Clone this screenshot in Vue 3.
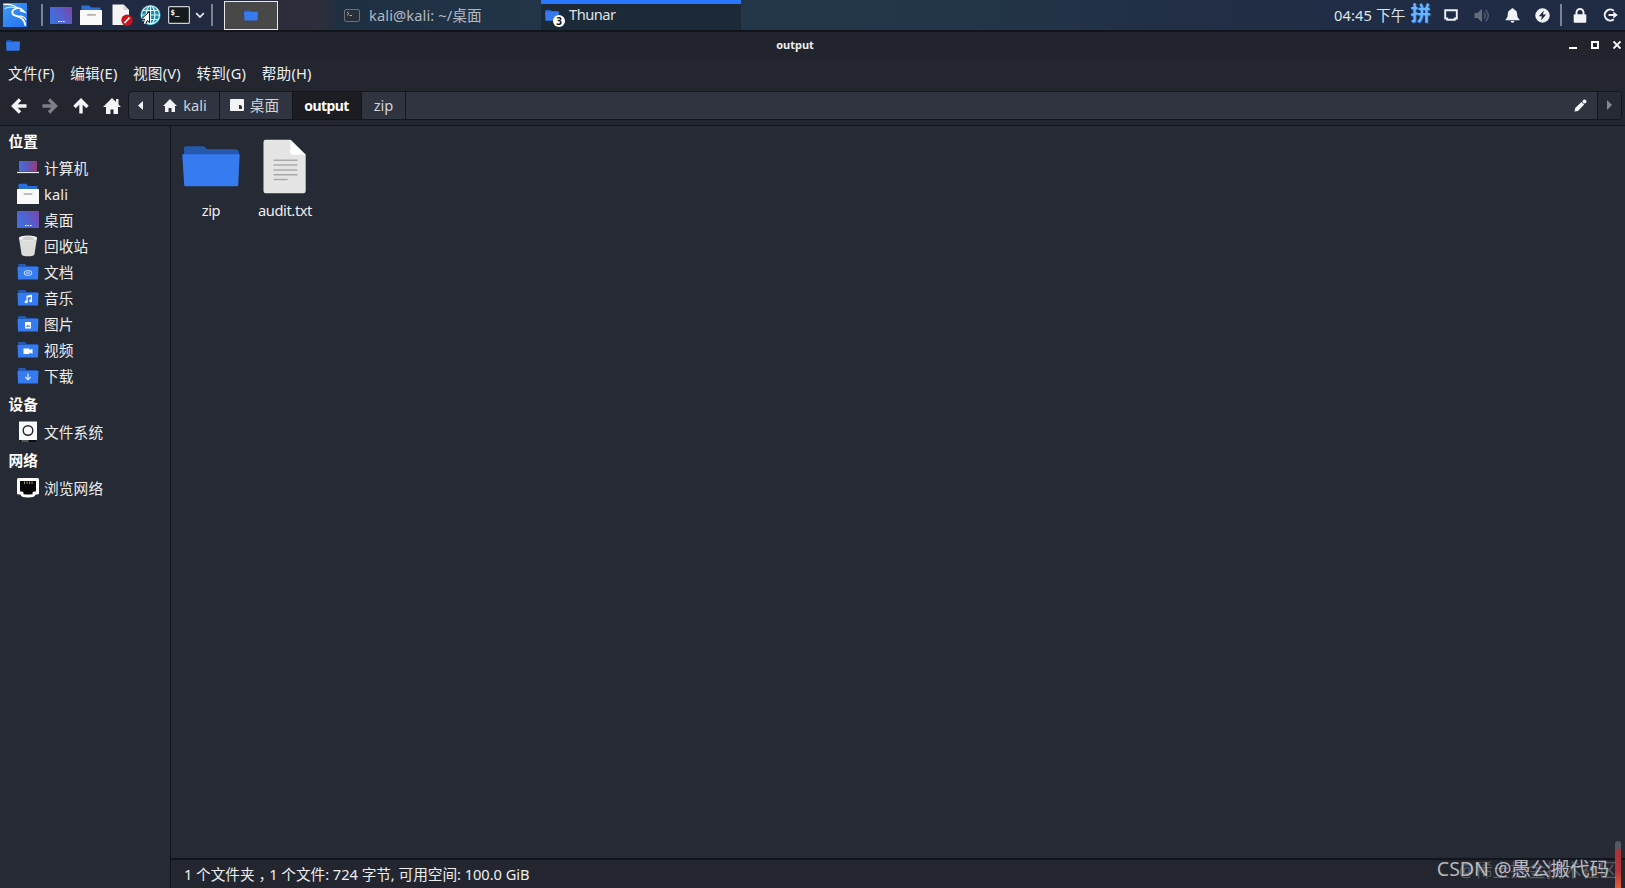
<script setup>
import { ref } from 'vue'

const menus = ['文件(F)', '编辑(E)', '视图(V)', '转到(G)', '帮助(H)']

const groups = [
  {
    title: '位置',
    items: [
      { name: '计算机', icon: 'computer' },
      { name: 'kali', icon: 'home' },
      { name: '桌面', icon: 'desktop' },
      { name: '回收站', icon: 'trash' },
      { name: '文档', icon: 'docs' },
      { name: '音乐', icon: 'music' },
      { name: '图片', icon: 'pictures' },
      { name: '视频', icon: 'video' },
      { name: '下载', icon: 'download' }
    ]
  },
  { title: '设备', items: [{ name: '文件系统', icon: 'disk' }] },
  { title: '网络', items: [{ name: '浏览网络', icon: 'network' }] }
]

const folderIcons = ['docs', 'music', 'pictures', 'video', 'download']

const crumbs = [
  { name: 'kali', cls: 'c-kali' },
  { name: '桌面', cls: 'c-desk' },
  { name: 'output', cls: 'c-output' },
  { name: 'zip', cls: 'c-zip' }
]
const current = ref('output')
</script>

<template>
  <div class="screen">
    <!-- 共用渐变 -->
    <svg class="defs" width="0" height="0">
      <defs>
        <linearGradient id="gDesk" x1="0" y1="0.6" x2="1" y2="0.2">
          <stop offset="0" stop-color="#3f6fe0" />
          <stop offset="0.5" stop-color="#5560cc" />
          <stop offset="1" stop-color="#7848b0" />
        </linearGradient>
        <linearGradient id="gComp" x1="0" y1="0" x2="1" y2="0">
          <stop offset="0" stop-color="#3f72e0" />
          <stop offset="0.5" stop-color="#6355b8" />
          <stop offset="1" stop-color="#983a78" />
        </linearGradient>
        <linearGradient id="gKali" x1="0" y1="0" x2="1" y2="1">
          <stop offset="0" stop-color="#3f9cf5" />
          <stop offset="1" stop-color="#2470f0" />
        </linearGradient>
      </defs>
    </svg>

    <!-- 顶部面板 -->
    <div class="panel">
      <div class="launchers">
        <svg class="kali-logo" width="24" height="24" viewBox="0 0 24 24">
          <rect width="24" height="24" fill="url(#gKali)" />
          <g fill="none" stroke="#fff" stroke-linecap="round">
            <path d="M1 1.5C6 1 10.5 1.5 14.5 5" stroke-width="1.1" />
            <path d="M2 5.5C6 3.5 10 3.8 14 5.5" stroke-width="0.9" />
            <path d="M13 5.2C17 4.2 19 6 21.5 9L17.5 7.7" stroke-width="1.6" />
            <path d="M13 5.5C7.5 7.5 8.5 12 13.5 13C18.5 14 21.5 16.5 22.3 22" stroke-width="1.8" />
            <path d="M16 13.2C19.5 12.6 21.5 14 22.8 16.5" stroke-width="1.1" />
          </g>
        </svg>
        <i class="sep sep-a"></i>
        <svg class="l-desk" width="22" height="17" viewBox="0 0 22 17">
          <rect width="22" height="17" rx="0.5" fill="url(#gDesk)" />
          <path d="M8 14.5h1.6M10.5 14.5h1.6M13 14.5h1.6" stroke="#fff" stroke-width="1.2" />
        </svg>
        <svg class="l-files" width="22" height="20" viewBox="0 0 22 20">
          <path d="M1.5 0.5h8l1.5 2h9.5V7h-19z" fill="#2a6fd6" />
          <rect y="5" width="22" height="15" rx="0.5" fill="#fafafa" />
          <rect x="7" y="9" width="9" height="1.8" rx="0.9" fill="#b5b0aa" />
        </svg>
        <svg class="l-edit" width="21" height="22" viewBox="0 0 21 22">
          <path d="M0.5 0.5h11L17 6v15H0.5z" fill="#f4f4f4" />
          <path d="M11.5 0.5V6H17z" fill="#d8d8d8" />
          <circle cx="15" cy="16.2" r="5.7" fill="#c8161d" />
          <path d="M12.5 19l5-5.5" stroke="#fff" stroke-width="1.7" />
        </svg>
        <svg class="l-web" width="22" height="22" viewBox="0 0 22 22">
          <circle cx="11.5" cy="11" r="10.3" fill="#168ca5" />
          <g fill="none" stroke="#d9f5f8" stroke-width="1.2">
            <circle cx="11.5" cy="11" r="9" />
            <ellipse cx="11.5" cy="11" rx="4.4" ry="9" />
            <path d="M11.5 2v18M2.5 11h18M4 6.5h15M4 15.5h15" />
          </g>
          <path d="M10.5 7.5L2 15.5l3.5-.3L4.2 19.6l2.3 1.2L8.2 16.5l2.3 2z" fill="#fff" stroke="#10202c" stroke-width="1" />
        </svg>
        <svg class="l-term" width="22" height="18" viewBox="0 0 22 18">
          <rect x="0.6" y="0.6" width="20.8" height="16.8" rx="1" fill="#151a1c" stroke="#c9ced0" stroke-width="1.2" />
          <text x="2.6" y="9.3" class="prompt">$_</text>
        </svg>
        <svg class="l-arrow" width="10" height="7" viewBox="0 0 10 7">
          <path d="M1.2 1.2L5 5L8.8 1.2" fill="none" stroke="#e8ecf2" stroke-width="1.7" />
        </svg>
        <i class="sep sep-b"></i>
      </div>
      <div class="workspace">
        <svg width="14" height="11" viewBox="0 0 14 11">
          <path d="M0.5 0.5h5l1 1h7V4H0.5z" fill="#2666cc" />
          <path d="M0 2h14l-.5 8.5H.5z" fill="#367bf0" />
        </svg>
      </div>
      <div class="task">
        <svg width="16" height="13" viewBox="0 0 16 13">
          <rect x="0.5" y="0.5" width="15" height="12" rx="1.5" fill="#29303a" stroke="#68717c" />
          <path d="M3 3l2 1.7L3 6.2M5.5 6.5h2.5" fill="none" stroke="#a6adb5" stroke-width="1" />
        </svg>
        <span>kali@kali: ~/桌面</span>
      </div>
      <div class="task active">
        <div class="task-icon">
          <svg width="14" height="11" viewBox="0 0 14 11">
            <path d="M0.5 0h5l1 1h7V4H0.5z" fill="#2666cc" />
            <path d="M0 1.7h14l-.5 9H.5z" fill="#367bf0" />
          </svg>
          <b class="count">3</b>
        </div>
        <span>Thunar</span>
      </div>
      <div class="tray">
        <span class="clock">04:45 下午</span>
        <span class="pinyin">拼</span>
        <svg class="t-disp" width="14" height="12" viewBox="0 0 14 12">
          <path d="M1.2 1.2h11.6v8.3h-2v1.2H3.200V9.500h-2z" fill="none" stroke="#eef1f5" stroke-width="1.9" />
        </svg>
        <svg class="t-vol" width="16" height="15" viewBox="0 0 16 15">
          <path d="M0.5 5h3L8 0.8v13.4L3.5 10h-3z" fill="#656d7b" />
          <path d="M10 4.5q2.4 3 0 6M11.6 1.8q5.5 5.7 0 11.4" fill="none" stroke="#515b6c" stroke-width="1.5" />
        </svg>
        <svg class="t-bell" width="15" height="15" viewBox="0 0 15 15">
          <path d="M7.5 0.2q1.3 0 1.4 1.4C11.8 2.4 12.3 4.8 12.3 8q.2 2 2.2 3.4v.9H.5v-.9Q2.5 10 2.7 8c0-3.2.5-5.6 3.4-6.4Q6.2.2 7.5.2zM5.5 13h4q-.4 1.8-2 1.8t-2-1.8z" fill="#f1f3f6" />
        </svg>
        <svg class="t-power" width="15" height="15" viewBox="0 0 15 15">
          <circle cx="7.5" cy="7.5" r="7.2" fill="#f1f3f6" />
          <path d="M8.8 2.5L3.8 8.3h3L6 12.5l5.2-6H8z" fill="#202b40" />
        </svg>
        <i class="sep sep-c"></i>
        <svg class="t-lock" width="14" height="15" viewBox="0 0 14 15">
          <path d="M3.5 7V4.5a3.5 3.5 0 0 1 7 0V7" fill="none" stroke="#f1f3f6" stroke-width="1.9" />
          <rect x="0.7" y="6.3" width="12.6" height="8.5" rx="0.8" fill="#f1f3f6" />
        </svg>
        <svg class="t-out" width="15" height="14" viewBox="0 0 15 14">
          <path d="M10.8 2.8A5.5 5.5 0 1 0 10.8 11.2" fill="none" stroke="#f1f3f6" stroke-width="2" />
          <path d="M5.5 7H12" stroke="#f1f3f6" stroke-width="2" />
          <path d="M10.3 3.5L14.8 7l-4.5 3.5z" fill="#f1f3f6" />
        </svg>
      </div>
    </div>

    <!-- 文件管理器窗口 -->
    <div class="titlebar">
      <svg class="win-icon" width="14" height="11" viewBox="0 0 14 11">
        <path d="M0.5 0h4.5l1 1h7.5v3h-13z" fill="#1d55b0" />
        <path d="M0 2h14l-.4 8.700H.4z" fill="#3177ea" />
      </svg>
      <span class="win-title">output</span>
      <div class="win-btns">
        <svg width="8" height="8" viewBox="0 0 8 8"><path d="M0 7h8" stroke="#fff" stroke-width="2" /></svg>
        <svg width="8" height="8" viewBox="0 0 8 8"><rect x="1" y="1" width="6" height="6" fill="none" stroke="#fff" stroke-width="2" /></svg>
        <svg width="8" height="8" viewBox="0 0 8 8"><path d="M.5.5l7 7M7.5.5l-7 7" stroke="#fff" stroke-width="1.9" /></svg>
      </div>
    </div>

    <div class="menubar">
      <span v-for="m in menus" :key="m">{{ m }}</span>
    </div>

    <div class="toolbar">
      <div class="nav">
        <svg width="16" height="16" viewBox="0 0 16 16"><path d="M9 1.5L2.5 8L9 14.5M3 8h12.5" fill="none" stroke="#f3f4f5" stroke-width="3.4" /></svg>
        <svg width="16" height="16" viewBox="0 0 16 16"><path d="M7 1.5L13.5 8L7 14.5M13 8H.5" fill="none" stroke="#7c7f85" stroke-width="3.4" /></svg>
        <svg width="16" height="16" viewBox="0 0 16 16"><path d="M1.5 9L8 2.5L14.5 9M8 3v12.5" fill="none" stroke="#f3f4f5" stroke-width="3.4" /></svg>
        <svg class="nav-home" width="18" height="16" viewBox="0 0 18 16"><path d="M9 0L0 9h3v7h4.5v-4.5h3V16H15V9h3l-2.5-2.500V1H13v3z" fill="#f3f4f5" /></svg>
      </div>
      <div class="pathbar">
        <div class="crumb c-prev">
          <svg width="5" height="9" viewBox="0 0 5 9"><path d="M5 0v9L0 4.5z" fill="#f0f1f3" /></svg>
        </div>
        <div
          v-for="c in crumbs"
          :key="c.name"
          class="crumb"
          :class="[c.cls, { on: current === c.name }]"
          @click="current = c.name"
        >
          <svg v-if="c.name === 'kali'" width="14" height="13" viewBox="0 0 14 13"><path d="M7 0L0 7h2v6h3.5V9h3v4H12V7h2z" fill="#f3f4f5" /></svg>
          <svg v-if="c.name === '桌面'" width="14" height="12" viewBox="0 0 14 12">
            <rect width="14" height="12" rx="1" fill="#f3f4f5" />
            <path d="M9 6h1.6l1.4 1.5V10H9z" fill="#2f3440" />
          </svg>
          <span>{{ c.name }}</span>
        </div>
        <div class="path-rest">
          <svg width="13" height="13" viewBox="0 0 13 13">
            <path d="M.5 12.5l.6-3.5L7.5 2.900l2.700 2.700L4 12z" fill="#f3f4f8" />
            <circle cx="10.5" cy="2.5" r="2" fill="#f3f4f8" />
          </svg>
        </div>
        <div class="crumb c-next">
          <svg width="5" height="10" viewBox="0 0 5 10"><path d="M0 0v10L5 5z" fill="#85888f" /></svg>
        </div>
      </div>
    </div>

    <div class="main">
      <div class="sidebar">
        <div v-for="g in groups" :key="g.title" class="group">
          <div class="group-title">{{ g.title }}</div>
          <div v-for="it in g.items" :key="it.name" class="place">
            <svg width="22" height="22" viewBox="0 0 22 22">
              <template v-if="it.icon === 'computer'">
                <rect x="2" y="4" width="18" height="10.5" fill="url(#gComp)" />
                <path d="M0 15.500h22" stroke="#eef0f6" stroke-width="1.2" />
              </template>
              <template v-else-if="it.icon === 'home'">
                <path d="M1.5.8h8l1.5 2.2h9.5V8h-19z" fill="#2a6fd6" />
                <rect y="6" width="22" height="15" rx="0.5" fill="#fafafa" />
                <rect x="6.5" y="10.3" width="9" height="1.5" rx="0.7" fill="#aaa" />
              </template>
              <template v-else-if="it.icon === 'desktop'">
                <rect y="2" width="22" height="17" rx="0.5" fill="url(#gDesk)" />
                <path d="M8 16.5h1.6M10.5 16.5h1.6M13 16.5h1.6" stroke="#fff" stroke-width="1.2" />
              </template>
              <template v-else-if="it.icon === 'trash'">
                <path d="M2 3l2.6 16.5Q5 21.3 11 21.3t6.4-1.8L20 3z" fill="#dcdcda" />
                <ellipse cx="11" cy="3.2" rx="9.2" ry="2.7" fill="#f2f2f0" />
                <path d="M5 4.5q1-2.8 6-3t6.5 3q-6 1.7-12.5 0z" fill="#cfcfcd" />
              </template>
              <template v-else-if="folderIcons.includes(it.icon)">
                <path d="M1.2 3h7l1.5 2h11v4H1.2z" fill="#2459b4" />
                <path d="M.5 6h21l-.5 12.5H1z" fill="#367bf0" />
                <g v-if="it.icon === 'docs'" fill="none" stroke="#dce9ff" stroke-width="1">
                  <rect x="7.2" y="9.8" width="7.6" height="4.4" rx="2.2" />
                  <path d="M9.3 12.6v-.6h3.6" />
                </g>
                <g v-else-if="it.icon === 'music'" fill="#fff">
                  <path d="M9.5 8.8l5.5-1v5.7h-1.2V10l-3.2.6v4.2H9.5z" />
                  <circle cx="9.2" cy="14.7" r="1.5" /><circle cx="13.7" cy="13.7" r="1.5" />
                </g>
                <g v-else-if="it.icon === 'pictures'">
                  <rect x="8" y="9" width="6" height="6.5" fill="#fff" />
                  <path d="M9 13.7l1.5-2 1 1 .8-.7L13.2 13.7z" fill="#367bf0" />
                </g>
                <path v-else-if="it.icon === 'video'" d="M6.5 9.5h6v1.5l3-1.3v5L12.5 13.5V15h-6z" fill="#fff" />
                <path v-else d="M11 8.5v6M8.3 12L11 14.7L13.7 12" fill="none" stroke="#dce9ff" stroke-width="1.2" />
              </template>
              <template v-else-if="it.icon === 'disk'">
                <rect x="2" y="0.5" width="18" height="18.5" rx="0.5" fill="#fafafa" />
                <circle cx="11" cy="9.5" r="4.8" fill="none" stroke="#20242c" stroke-width="1.4" />
                <rect x="3" y="19" width="16" height="2" fill="#0c0d10" />
                <path d="M4.5 20h7" stroke="#9a9ca0" stroke-width="1" />
              </template>
              <template v-else>
                <path d="M1.5 2.5h19v13.5h-3.5v1.5q-.5 1.500-6 1.500t-6-1.500V16H1.5z" fill="#050605" stroke="#fff" stroke-width="3" stroke-linejoin="round" />
                <path d="M7.5 4.5v2.5M10 4.5v2.5M12.5 4.5v2.5M15 4.5v2.5" stroke="#a9a860" stroke-width="0.9" />
              </template>
            </svg>
            <span>{{ it.name }}</span>
          </div>
        </div>
      </div>

      <div class="content">
        <div class="files">
          <div class="file">
            <svg width="58" height="56" viewBox="0 0 58 56">
              <path d="M2 16V9q0-1.8 1.8-1.8h17.4q1.3 0 2 1l1.8 2h28.5q3 0 3.5 3V18H2z" fill="#2459ae" />
              <path d="M.3 15.3h57.4L56.2 46q-.1 1.2-1.2 1.2H3.5q-1.2 0-1.3-1.2z" fill="#367bf0" />
            </svg>
            <span>zip</span>
          </div>
          <div class="file">
            <svg width="58" height="56" viewBox="0 0 58 56">
              <path d="M9.5.8h25.1L49.7 15.8V52q0 2.3-2.3 2.3H9.8q-2.3 0-2.3-2.3V3Q7.5.8 9.5.8z" fill="#e5e5e5" />
              <path d="M34.3.8V13.5q0 2.3 2.3 2.3h13.1z" fill="#fff" />
              <path d="M17.5 21.3h24M17.5 26.1h24M17.5 30.9h24M17.5 35.7h24M17.5 40.5h14" stroke="#aaa" stroke-width="1.5" />
            </svg>
            <span>audit.txt</span>
          </div>
        </div>
        <div class="statusbar">1 个文件夹<span class="comma">，</span>1 个文件: 724 字节, 可用空间: 100.0 GiB</div>
      </div>
    </div>

    <div class="scroll-mark"></div>
    <div class="watermark under">@稀土掘金技术社区</div>
    <div class="watermark">CSDN @愚公搬代码</div>
  </div>
</template>

<style>
body {
  background: #262a34;
  overflow: hidden;
}
</style>

<style scoped>
.screen {
  position: relative;
  display: flex;
  flex-direction: column;
  width: 1625px;
  height: 888px;
  overflow: hidden;
  background: #23262f;
  color: #eceef0;
  font-family: "Noto Sans", "Noto Sans CJK SC", sans-serif;
  font-size: 14.67px;
  line-height: 20px;
  white-space: nowrap;
}

svg {
  display: block;
  flex-shrink: 0;
}

.defs {
  position: absolute;
}

/* 顶部面板 */
.panel {
  display: flex;
  box-sizing: border-box;
  height: 32px;
  flex-shrink: 0;
  border-bottom: 2px solid #11141a;
  background: linear-gradient(90deg, #1f2a44 0, #222a40 210px, #2d2d3a 290px, #2b2e3b 325px, #1f2f42 340px, #213448 520px, #243748 760px, #233548 960px, #212e46 1200px, #1f2a43 100%);
}

.launchers {
  display: flex;
  align-items: center;
  width: 224px;
  flex-shrink: 0;
}

.sep {
  width: 2px;
  height: 22px;
  background: #7b8290;
}

.kali-logo { margin-left: 3px; }
.sep-a { margin-left: 14px; }
.l-desk { margin-left: 7px; }
.l-files { margin-left: 8px; }
.l-edit { margin-left: 10px; }
.l-web { margin-left: 6px; }
.l-term { margin-left: 7px; }
.l-arrow { margin-left: 5px; }
.sep-b { margin-left: 6px; }

.prompt {
  font: bold 7.5px "DejaVu Sans Mono", monospace;
  fill: #fff;
}

.workspace {
  box-sizing: border-box;
  display: flex;
  align-items: center;
  justify-content: center;
  width: 54px;
  height: 29px;
  margin-top: 1px;
  border: 1px solid #e6e7e9;
  background: #484848;
}

.task {
  display: flex;
  box-sizing: border-box;
  align-items: center;
  width: 200px;
  height: 30px;
  margin-left: 63px;
  padding-left: 3px;
  color: #b3b9c0;
}

.task span {
  margin-left: 9px;
  letter-spacing: 0.1px;
}

.task.active {
  margin-left: 0;
  padding: 0 0 4px 4px;
  border-top: 4px solid #2777ff;
  background: #1c2936;
  color: #dfe3e6;
}

.task.active span {
  margin-left: 10px;
  padding-bottom: 2px;
  letter-spacing: -0.5px;
}

.task-icon {
  position: relative;
}

.count {
  position: absolute;
  left: 8px;
  top: 5px;
  width: 12px;
  height: 12px;
  border-radius: 50%;
  background: #fff;
  color: #111;
  font-size: 10px;
  line-height: 12px;
  text-align: center;
}

.tray {
  display: flex;
  align-items: center;
  margin-left: auto;
  padding-right: 7px;
  color: #dfe4ea;
}

.clock {
  letter-spacing: 0.1px;
}

.pinyin {
  margin-left: 5px;
  color: #69b7ff;
  font-size: 20.5px;
  line-height: 26px;
  font-weight: bold;
  padding-bottom: 4px;
  text-shadow: 1px 1px 0 #2457a8;
}

.t-disp { margin-left: 13px; }
.t-vol { margin-left: 16px; }
.t-bell { margin-left: 15px; }
.t-power { margin-left: 15px; }
.sep-c { margin-left: 10px; }
.t-lock { margin-left: 11px; }
.t-out { margin-left: 16px; }

/* 标题栏和菜单 */
.titlebar {
  position: relative;
  display: flex;
  align-items: center;
  justify-content: space-between;
  height: 28px;
  flex-shrink: 0;
  padding: 0 4px 2px 6px;
  box-sizing: border-box;
  background: #21242d;
}

.win-title {
  position: absolute;
  left: 0;
  width: 1590px;
  text-align: center;
  font-size: 11px;
  font-weight: bold;
}

.win-btns {
  display: flex;
  gap: 14px;
}

.menubar {
  display: flex;
  gap: 15.5px;
  height: 28px;
  line-height: 26px;
  flex-shrink: 0;
  padding-left: 8px;
  letter-spacing: 0.2px;
}

.toolbar {
  display: flex;
  box-sizing: border-box;
  height: 38px;
  flex-shrink: 0;
  padding: 3px 3px 5px 11px;
  border-bottom: 1px solid #11141b;
}

.nav {
  display: flex;
  align-items: center;
  gap: 15px;
  width: 117px;
}

.nav-home {
  margin-left: -1px;
}

.pathbar {
  display: flex;
  box-sizing: border-box;
  flex: 1;
  border: 1px solid #12151c;
  border-radius: 4px;
  background: #2f3440;
  overflow: hidden;
}

.crumb {
  display: flex;
  box-sizing: border-box;
  align-items: center;
  justify-content: center;
  gap: 6px;
  padding-bottom: 1px;
  border-right: 1px solid #12151c;
  color: #d0d3d8;
}

.c-prev { width: 25px; padding-right: 2px; }
.c-kali { width: 66px; padding-right: 3px; }
.c-desk { width: 73px; padding-right: 3px; }
.c-output { width: 69px; }
.c-zip { width: 44px; }

.crumb.on {
  padding: 1px 1px 0 0;
  background: #1b1d23;
  color: #fff;
  font-size: 14px;
  font-weight: bold;
  letter-spacing: -0.6px;
}

.path-rest {
  display: flex;
  align-items: center;
  justify-content: flex-end;
  flex: 1;
  padding-right: 10px;
}

.c-next {
  width: 24px;
  border-right: none;
  border-left: 1px solid #12151c;
  background: #262a34;
}

/* 侧栏 */
.main {
  display: flex;
  flex: 1;
  min-height: 0;
  background: #262a34;
}

.sidebar {
  box-sizing: border-box;
  width: 171px;
  flex-shrink: 0;
  padding-top: 1px;
  border-right: 1px solid #11141b;
}

.group-title {
  height: 28px;
  padding-left: 8.5px;
  font-weight: bold;
  line-height: 28px;
  color: #fff;
}

.group + .group .group-title {
  height: 30px;
  line-height: 31px;
}

.place {
  display: flex;
  align-items: center;
  height: 26px;
  padding-left: 17px;
  gap: 5px;
}

.place span {
  letter-spacing: 0.15px;
}

/* 文件区 */
.content {
  display: flex;
  flex-direction: column;
  flex: 1;
}

.files {
  display: flex;
  flex: 1;
  padding: 13px 0 0 3px;
}

.file {
  display: flex;
  flex-direction: column;
  align-items: center;
  width: 74px;
}

.file span {
  margin-top: 5px;
  letter-spacing: -0.4px;
}

.statusbar {
  height: 28px;
  padding-left: 13px;
  border-top: 2px solid #12151b;
  background: #23262f;
  line-height: 28px;
  letter-spacing: -0.04px;
}

/* 逗号在全角格内居中 */
.comma {
  position: relative;
  left: 4px;
}

/* 右下角 */
.scroll-mark {
  position: absolute;
  right: 4px;
  bottom: 0;
  width: 6px;
  height: 47px;
  border-radius: 3px 3px 0 0;
  background: linear-gradient(180deg, #55585e 0, #55585e 7px, #a93236 10px, #b8343a 30px, #e06038 100%);
}

.watermark {
  position: absolute;
  right: 16px;
  bottom: 6px;
  color: rgba(220, 222, 226, 0.8);
  font-size: 19.5px;
  line-height: 26px;
}

.watermark.under {
  right: 8px;
  bottom: 5px;
  color: rgba(190, 193, 200, 0.35);
  font-size: 17.8px;
}
</style>
